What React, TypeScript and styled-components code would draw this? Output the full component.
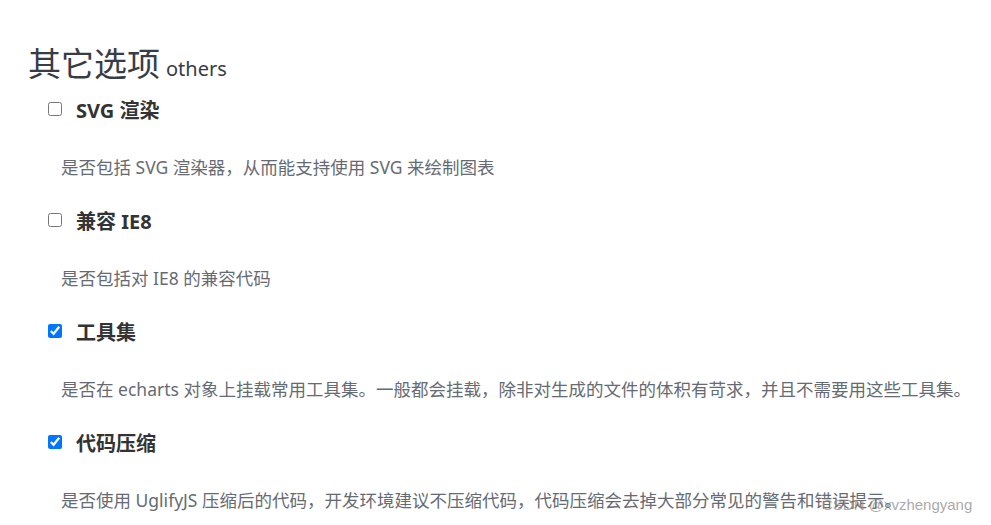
import styled, { createGlobalStyle } from "styled-components";

const GlobalStyle = createGlobalStyle`
  html, body {
    margin: 0;
    padding: 0;
    background: #fff;
  }
  body {
    font-family: "Noto Sans", "Noto Sans CJK SC", sans-serif;
  }
`;

const Page = styled.div`
  position: relative;
  width: 991px;
  height: 525px;
  overflow: hidden;
  padding: 44px 0 0 28px;
  box-sizing: border-box;
`;

const Heading = styled.h2`
  margin: 0;
  display: flex;
  align-items: baseline;
  column-gap: 6px;
  height: 40px;
  line-height: 40px;
  font-size: 33px;
  font-weight: 400;
  color: #363d47;
`;

const Sub = styled.small`
  font-size: 20px;
  color: #363d47;
`;

const List = styled.div`
  display: flex;
  flex-direction: column;
  row-gap: 26px;
  margin-top: 10px;
`;

const Item = styled.div`
  display: flex;
  flex-direction: column;
  row-gap: 31px;
`;

const LabelRow = styled.label`
  display: flex;
  align-items: center;
  column-gap: 14px;
  height: 30px;
  padding-left: 20px;
  font-size: 20px;
  font-weight: 700;
  color: #333;
`;

const Check = styled.input`
  width: 14px;
  height: 14px;
  margin: 0;
`;

const Desc = styled.p`
  margin: 0;
  padding-left: 33px;
  font-size: 17.5px;
  line-height: 24px;
  color: #666b73;
  white-space: nowrap;
`;

const Watermark = styled.span`
  position: absolute;
  left: 822px;
  top: 496px;
  font-family: "Liberation Sans", "Noto Sans", sans-serif;
  font-size: 15px;
  color: rgba(140, 140, 140, 0.75);
`;

const options = [
  {
    title: "SVG 渲染",
    checked: false,
    desc: "是否包括 SVG 渲染器，从而能支持使用 SVG 来绘制图表",
  },
  { title: "兼容 IE8", checked: false, desc: "是否包括对 IE8 的兼容代码" },
  {
    title: "工具集",
    checked: true,
    desc: "是否在 echarts 对象上挂载常用工具集。一般都会挂载，除非对生成的文件的体积有苛求，并且不需要用这些工具集。",
  },
  {
    title: "代码压缩",
    checked: true,
    desc: "是否使用 UglifyJS 压缩后的代码，开发环境建议不压缩代码，代码压缩会去掉大部分常见的警告和错误提示。",
  },
];

const App = () => {
  return (
    <Page>
      <GlobalStyle />
      <Heading>
        其它选项 <Sub>others</Sub>
      </Heading>
      <List>
        {options.map((o) => (
          <Item key={o.title}>
            <LabelRow>
              <Check type="checkbox" defaultChecked={o.checked} />
              {o.title}
            </LabelRow>
            <Desc>{o.desc}</Desc>
          </Item>
        ))}
      </List>
      <Watermark>CSDN @xvzhengyang</Watermark>
    </Page>
  );
};

export default App;
